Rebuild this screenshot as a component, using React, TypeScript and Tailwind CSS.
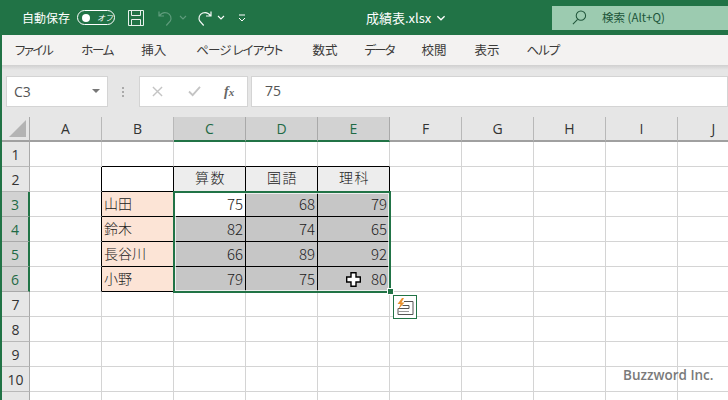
import React from "react";

const cols = ["A", "B", "C", "D", "E", "F", "G", "H", "I", "J"];
const rows = [1, 2, 3, 4, 5, 6, 7, 8, 9, 10, 11];
const tabs = [
  { t: "ファイル", c: "ml-[15px] tracking-[-1.500px]" },
  { t: "ホーム", c: "ml-[29px] tracking-[-1.300px]" },
  { t: "挿入", c: "ml-[28px]" },
  { t: "ページ レイアウト", c: "ml-[30px] tracking-[-0.900px]" },
  { t: "数式", c: "ml-[30px]" },
  { t: "データ", c: "ml-[27px] tracking-[-2px]" },
  { t: "校閲", c: "ml-[28px]" },
  { t: "表示", c: "ml-[28px]" },
  { t: "ヘルプ", c: "ml-[27px] tracking-[-1px]" },
];
const data: Record<number, (string | number)[]> = {
  2: ["", "算数", "国語", "理科"],
  3: ["山田", 75, 68, 79],
  4: ["鈴木", 82, 74, 65],
  5: ["長谷川", 66, 89, 92],
  6: ["小野", 79, 75, 80],
};

function cellClass(r: number, c: number) {
  const inTable = r >= 2 && r <= 6 && c >= 1 && c <= 4;
  const right = inTable || (c === 0 && r >= 2 && r <= 6) ? "border-r-black" : "border-r-[#d4d4d4]";
  const bottom = inTable || (r === 1 && c >= 1 && c <= 4) ? "border-b-black" : "border-b-[#d4d4d4]";
  let bg = "bg-white";
  if (r === 2 && c >= 2 && c <= 4) bg = "bg-[#ededed]";
  if (r >= 3 && r <= 6 && c === 1) bg = "bg-[#fce4d6]";
  if (r >= 3 && r <= 6 && c >= 2 && c <= 4 && !(r === 3 && c === 2)) bg = "bg-[#c6c6c6]";
  return `${right} ${bottom} ${bg}`;
}

function Chevron({ className }: { className: string }) {
  return (
    <svg viewBox="0 0 8 5" className={className} fill="none" stroke="currentColor" strokeWidth="1.1">
      <path d="M1 1l3 3 3-3" />
    </svg>
  );
}

export default function App() {
  return (
    <div
      className="relative flex h-[400px] w-[728px] flex-col overflow-hidden border-l-2 border-l-[#217346] bg-white text-[#333]"
      style={{ fontFamily: '"Noto Sans CJK JP", "Noto Sans", sans-serif' }}
    >
      {/* Title bar */}
      <div className="-ml-[2px] flex h-[35px] shrink-0 items-center bg-[#217346] text-white">
        <span className="ml-[22px] w-[48px] text-[12px] whitespace-nowrap">自動保存</span>
        <div className="ml-[7px] flex h-[15px] w-[38px] items-center rounded-full border border-white pl-[4px]">
          <span className="h-[8px] w-[8px] rounded-full bg-white" />
          <span className="ml-[7px] text-[8px] leading-none italic">オフ</span>
        </div>
        <svg viewBox="0 0 16 16" className="ml-[13px] h-[16px] w-[16px]" fill="none" stroke="#e8f1ec" strokeWidth="1">
          <path d="M.5.5h15v15H.5zM3.5.5v5h9v-5M3.5 15.5v-6h9v6" />
        </svg>
        <svg viewBox="0 0 16 16" className="ml-[14px] h-[16px] w-[16px]" fill="none" stroke="#5f9c7c" strokeWidth="1.2">
          <path d="M1 1.5v4.5h5M1.3 6c2-3 5-4 8-3 3.500 1.300 4.500 5 3 8l-4 4.500" />
        </svg>
        <Chevron className="ml-[5px] h-[5px] w-[8px] text-[#5f9c7c]" />
        <svg viewBox="0 0 16 16" className="ml-[9px] h-[16px] w-[16px]" fill="none" stroke="#f4f8f6" strokeWidth="1.2">
          <path d="M15 1.500v4.500h-5M14.700 6c-2-3-5-4-8-3-3.500 1.300-4.500 5-3 8l4 4.500" />
        </svg>
        <Chevron className="ml-[5px] h-[5px] w-[8px] text-white" />
        <svg viewBox="0 0 8 8" className="ml-[13px] h-[8px] w-[8px]" fill="none" stroke="white" strokeWidth="1">
          <path d="M1 1h6M1 4l3 3 3-3" />
        </svg>
        <span className="ml-[120px] w-[68px] text-[13px] whitespace-nowrap">成績表.xlsx</span>
        <Chevron className="ml-[2px] h-[6px] w-[10px] text-white" />
        <div className="ml-[106px] flex h-[24px] flex-1 items-center bg-[#9ccbb0] text-[#20553a]">
          <svg viewBox="0 0 16 16" className="ml-[20px] h-[15px] w-[15px]" fill="none" stroke="#20553a" strokeWidth="1.1">
            <circle cx="9.500" cy="6" r="5" />
            <path d="M6 10L1 15" />
          </svg>
          <span className="ml-[15px] text-[11.500px] whitespace-nowrap">検索 (Alt+Q)</span>
        </div>
      </div>

      {/* Ribbon tabs */}
      <div className="-ml-[2px] flex h-[30px] shrink-0 items-center bg-[#f3f2f1] text-[12.500px] text-[#3b3a39] [font-feature-settings:'palt']">
        {tabs.map((x) => (
          <span key={x.t} className={`${x.c} whitespace-nowrap`}>
            {x.t}
          </span>
        ))}
      </div>
      <div className="h-[5px] shrink-0 bg-gradient-to-b from-[#d0d0d0] to-[#e6e6e6]" />

      {/* Formula bar */}
      <div className="flex h-[47px] shrink-0 bg-[#e6e6e6] pt-[6px] pl-[4px]">
        <div className="flex h-[31px] w-[102px] items-center border border-[#d4d4d4] bg-white pb-[1px] pl-[7px] text-[14px] text-[#555]">
          <span style={{ fontFamily: '"Open Sans", sans-serif' }}>C3</span>
          <span className="mr-[7px] ml-auto h-0 w-0 border-x-[4px] border-t-[4px] border-x-transparent border-t-[#777]" />
        </div>
        <div className="ml-[14px] flex h-[31px] w-[3px] flex-col justify-center gap-[2px]">
          <span className="h-[2px] w-[2px] bg-[#aaa]" />
          <span className="h-[2px] w-[2px] bg-[#aaa]" />
          <span className="h-[2px] w-[2px] bg-[#aaa]" />
        </div>
        <div className="ml-[14px] flex h-[31px] w-[109px] items-center border border-[#d4d4d4] bg-white">
          <svg viewBox="0 0 12 12" className="ml-[12px] h-[11px] w-[11px]" fill="none" stroke="#c4c4c4" strokeWidth="1.500">
            <path d="M1 1l10 10M11 1L1 11" />
          </svg>
          <svg viewBox="0 0 14 12" className="ml-[25px] h-[11px] w-[13px]" fill="none" stroke="#c4c4c4" strokeWidth="2">
            <path d="M1 6l4 4 8-9" />
          </svg>
          <span className="ml-[23px] text-[14px] font-bold text-[#666] italic" style={{ fontFamily: '"Liberation Serif", serif' }}>
            f<span className="text-[11px]">x</span>
          </span>
        </div>
        <div className="ml-[3px] flex h-[31px] flex-1 items-center border border-[#d4d4d4] bg-white pb-[2px] pl-[13px] text-[14px] text-[#555]">
          <span style={{ fontFamily: '"Open Sans", sans-serif' }}>75</span>
        </div>
      </div>

      {/* Sheet */}
      <div className="relative flex-1">
        <div className="grid grid-cols-[28px_repeat(10,72px)] grid-rows-[25px_repeat(11,25px)]">
          <div className="relative border-r border-b-2 border-r-[#a9a9a9] border-b-[#a0a0a0] bg-[#e6e6e6]">
            <span className="absolute right-[3px] bottom-[3px] h-0 w-0 border-b-[17px] border-l-[17px] border-b-[#b4b4b4] border-l-transparent" />
          </div>
          {cols.map((c, i) => {
            const sel = i >= 2 && i <= 4;
            return (
              <div
                key={c}
                className={`flex items-center justify-center border-r border-b-2 pb-[1px] text-[14px] ${
                  sel
                    ? "border-r-[#a9a9a9] border-b-[#217346] bg-[#d2d2d2] text-[#1f6a45]"
                    : "border-r-[#b8b8b8] border-b-[#a0a0a0] bg-[#e6e6e6] text-[#333]"
                }`}
                style={{ fontFamily: '"Open Sans", sans-serif' }}
              >
                {c}
              </div>
            );
          })}
          {rows.map((r) => {
            const sel = r >= 3 && r <= 6;
            return (
              <React.Fragment key={r}>
                <div
                  className={`flex items-center justify-center border-r text-[14px] ${
                    sel
                      ? "border-r-2 border-b border-r-[#217346] border-b-[#a9a9a9] bg-[#d2d2d2] text-[#1f6a45]"
                      : "border-b border-r-[#a9a9a9] border-b-[#b8b8b8] bg-[#e6e6e6] text-[#333]"
                  }`}
                  style={{ fontFamily: '"Open Sans", sans-serif' }}
                >
                  {r}
                </div>
                {cols.map((_, c) => {
                  const v = c >= 1 && c <= 4 ? data[r]?.[c - 1] : undefined;
                  const isNum = typeof v === "number";
                  return (
                    <div
                      key={c}
                      className={`flex items-center border-r border-b text-[14px] font-light text-[#222] ${cellClass(r, c)} ${
                        isNum ? "justify-end pr-[2px] text-[15px]" : c === 1 ? "pb-[1px] pl-[2px]" : "justify-center"
                      } ${r === 2 ? "pb-[3px] pl-[2px] tracking-[1.500px]" : ""}`}
                    >
                      {v}
                    </div>
                  );
                })}
              </React.Fragment>
            );
          })}
        </div>

        {/* Selection frame */}
        <div className="pointer-events-none absolute top-[74px] left-[170.500px] h-[102px] w-[218px] border-2 border-[#217346] outline outline-offset-[-3px] outline-white/70" />
        <div className="absolute top-[171px] left-[384.500px] h-[7px] w-[7px] border border-white bg-[#217346]" />

        {/* Cursor */}
        <svg viewBox="0 0 15 15" className="absolute top-[155px] left-[344px] h-[15px] w-[15px]">
          <path d="M5 .7h5v4.300h4.300v5H10v4.300H5V10H.7V5H5z" fill="white" stroke="black" strokeWidth="1.400" />
        </svg>

        {/* Quick analysis tag */}
        <div className="absolute top-[178px] left-[391px] flex h-[24px] w-[24px] items-center justify-center border border-[#217346] bg-white">
          <svg viewBox="0 0 20 20" className="h-[20px] w-[20px]" fill="none">
            <path d="M9 4.500h9v13H3v-6h11V8.500H7.500" stroke="#555" strokeWidth="1" />
            <path d="M3 14.500h11" stroke="#999" strokeWidth="1" />
            <path d="M7 1L2.500 7h3L3.500 12l6-6.500h-3L9 1z" fill="#e8912d" />
          </svg>
        </div>

        {/* Watermark */}
        <span
          className="absolute top-[248px] left-[621px] text-[13.500px] font-semibold whitespace-nowrap text-[#7a7a7a]"
          style={{ fontFamily: '"Open Sans", sans-serif' }}
        >
          Buzzword Inc.
        </span>
      </div>
    </div>
  );
}
